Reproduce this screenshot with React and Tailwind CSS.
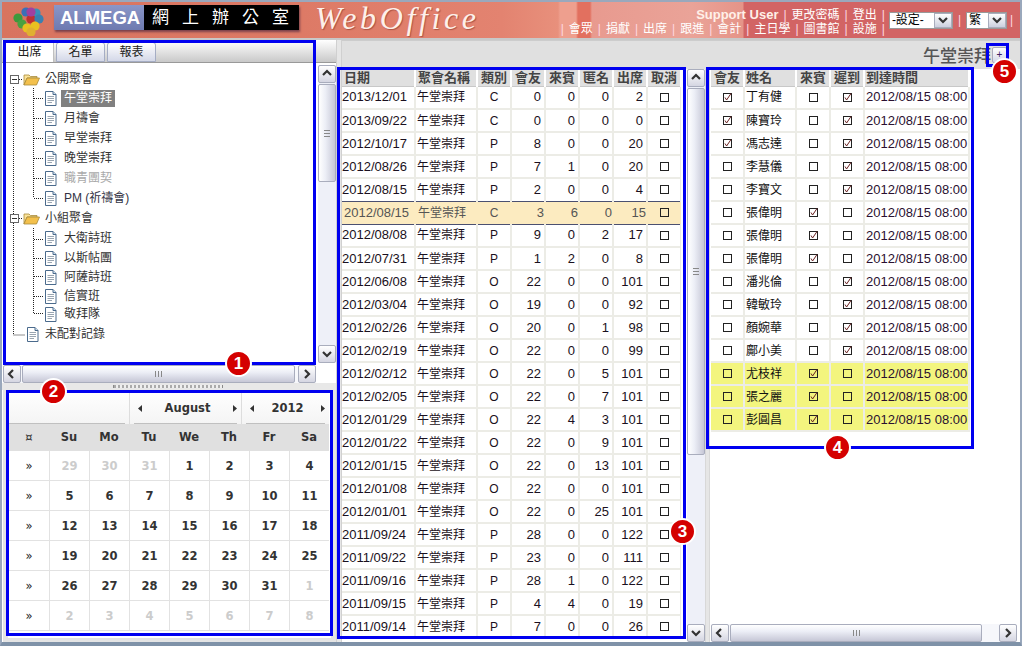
import React from "react";

const F = "[font-family:'Liberation_Sans','Noto_Sans_CJK_TC',sans-serif]";
const rows = [
  ["2013/12/01","C",0,0,0,2],["2013/09/22","C",0,0,0,0],["2012/10/17","P",8,0,0,20],["2012/08/26","P",7,1,0,20],
  ["2012/08/15","P",2,0,0,4],["2012/08/15","C",3,6,0,15],["2012/08/08","P",9,0,2,17],["2012/07/31","P",1,2,0,8],
  ["2012/06/08","O",22,0,0,101],["2012/03/04","O",19,0,0,92],["2012/02/26","O",20,0,1,98],["2012/02/19","O",22,0,0,99],
  ["2012/02/12","O",22,0,5,101],["2012/02/05","O",22,0,7,101],["2012/01/29","O",22,4,3,101],["2012/01/22","O",22,0,9,101],
  ["2012/01/15","O",22,0,13,101],["2012/01/08","O",22,0,0,101],["2012/01/01","O",22,0,25,101],["2011/09/24","P",28,0,0,122],
  ["2011/09/22","P",23,0,0,111],["2011/09/16","P",28,1,0,122],["2011/09/15","P",4,4,0,19],["2011/09/14","P",7,0,0,26],
];
const people = [
  ["丁有健",1,0,1],["陳寶玲",1,0,1],["馮志達",1,0,1],["李慧儀",0,0,1],["李寶文",0,0,1],["張偉明",0,1,0],["張偉明",0,1,0],["張偉明",0,1,0],
  ["潘兆倫",0,0,1],["韓敏玲",0,0,1],["顏婉華",0,0,1],["鄺小美",0,0,1],["尤枝祥",0,1,0],["張之麗",0,1,0],["彭圓昌",0,1,0],
];
const tree = [
  { t: "公開聚會", h: 20, k: "folder" },
  { t: "午堂崇拜", h: 19, k: "doc", sel: true },
  { t: "月禱會", h: 20, k: "doc" },
  { t: "早堂崇拜", h: 20, k: "doc" },
  { t: "晚堂崇拜", h: 20, k: "doc" },
  { t: "職青團契", h: 20, k: "doc", dim: true },
  { t: "PM (祈禱會)", h: 20, k: "doc" },
  { t: "小組聚會", h: 20, k: "folder" },
  { t: "大衛詩班", h: 21, k: "doc" },
  { t: "以斯帖團", h: 19, k: "doc" },
  { t: "阿薩詩班", h: 18, k: "doc" },
  { t: "信實班", h: 20, k: "doc" },
  { t: "敬拜隊", h: 17, k: "doc" },
  { t: "未配對記錄", h: 22, k: "top" },
];

function Chev({ d }) {
  const p = { up: "M2 7 L6 3 L10 7", down: "M2 4 L6 8 L10 4", left: "M7 2 L3 6 L7 10", right: "M4 2 L8 6 L4 10" }[d];
  return (
    <svg width="12" height="12" viewBox="0 0 12 12" fill="none">
      <path d={p} stroke="#333" strokeWidth="2.2" />
    </svg>
  );
}
const btn = "flex items-center justify-center shrink-0 w-[18px] h-[18px] rounded-[2px] border border-[#a9adbd] bg-[linear-gradient(#ffffff,#d5d6e2)]";
function VScroll({ thumb }) {
  return (
    <div className="w-[18px] h-full flex flex-col bg-[#eef0f8]">
      <div className={btn}><Chev d="up" /></div>
      <div className="flex-1 min-h-0">
        <div style={{ height: thumb }} className="mt-px rounded-[2px] border border-[#a9adbd] bg-[linear-gradient(90deg,#ffffff,#eceef6_40%,#c6c7d6)] flex items-center justify-center">
          <div className="w-[6px] h-[7px] border-y border-[#888] relative"><div className="absolute left-0 right-0 top-[2px] h-px bg-[#888]" /></div>
        </div>
      </div>
      <div className={btn}><Chev d="down" /></div>
    </div>
  );
}
function HScroll({ thumb }) {
  return (
    <div className="h-[18px] flex items-stretch bg-[#f6f7fb]">
      <div className={btn}><Chev d="left" /></div>
      <div className="flex-1 min-w-0 px-[1px]">
        <div style={{ width: thumb }} className="h-full rounded-[2px] border border-[#a9adbd] bg-[linear-gradient(#ffffff,#eceef6_40%,#c6c7d6)] flex items-center justify-center">
          <div className="w-[7px] h-[6px] border-x border-[#888] relative"><div className="absolute top-0 bottom-0 left-[2px] w-px bg-[#888]" /></div>
        </div>
      </div>
      <div className={btn}><Chev d="right" /></div>
    </div>
  );
}
function Box({ on }) {
  return (
    <svg width="11" height="11" viewBox="0 0 11 11" className="block mx-auto" fill="none">
      <rect x="1.5" y="1.5" width="8" height="8" stroke="#222" />
      {on ? <path d="M3 5.5 L4.6 8 L9 1.5" stroke="#6a2020" strokeWidth="1" /> : null}
    </svg>
  );
}
function Doc() {
  return (
    <svg width="13" height="15" viewBox="0 0 13 15" fill="none">
      <path d="M1.5 .5 H9 L12 3.5 V14.5 H1.5 Z" fill="#fff" stroke="#4a6a8c" />
      <path d="M9 .5 V3.5 H12" fill="#cfe0ee" stroke="#4a6a8c" />
      <path d="M3.5 5.5 H10 M3.5 7.5 H10 M3.5 9.5 H10 M3.5 11.5 H8" stroke="#9aa6b2" />
    </svg>
  );
}
function Folder() {
  return (
    <svg width="17" height="13" viewBox="0 0 17 13" fill="none">
      <path d="M1 12 V2 H6 L7.5 3.5 H14 V5 H4 Z" fill="#fbe39a" stroke="#a88a3a" strokeWidth=".8" />
      <path d="M1 12 L4 5 H16.5 L13.5 12 Z" fill="#f3c04c" stroke="#a88a3a" strokeWidth=".8" />
    </svg>
  );
}
function Minus() {
  return (
    <span className="w-[9px] h-[9px] border border-[#666] bg-white flex items-center justify-center shrink-0">
      <span className="w-[5px] h-px bg-[#333]" />
    </span>
  );
}
function Arrow({ right }) {
  return (
    <svg width="4" height="7" viewBox="0 0 4 7"><path d={right ? "M0 0 L4 3.5 L0 7 Z" : "M4 0 L0 3.5 L4 7 Z"} fill="#333" /></svg>
  );
}
function Tree() {
  return (
    <div className="relative pt-[6px] pl-[8px]">
      <svg className="absolute left-0 top-0" width="60" height="300" fill="none" stroke="#222" strokeDasharray="1 1">
        <path d="M11.5 24 V272 H23" />
        <path d="M31.5 25 V135" />
        <path d="M31.5 165 V250" />
        <path d="M32 35.5 H41 M32 55.5 H41 M32 75.5 H41 M32 95.5 H41 M32 115.5 H41 M32 135.5 H41" />
        <path d="M32 176.5 H41 M32 195.5 H41 M32 213.5 H41 M32 233.5 H41 M32 250.5 H41" />
        <path d="M17 16.5 H21 M17 155.5 H21" />
      </svg>
      {tree.map((n, i) => (
        <div key={i} style={{ height: n.h }} className={`relative flex items-center ${n.k === "doc" ? "pl-[34px]" : n.k === "top" ? "pl-[16px]" : ""}`}>
          {n.k === "folder" ? <><Minus /><span className="ml-[4px]"><Folder /></span></> : <Doc />}
          <span className={`${n.k === "doc" ? "ml-[4px]" : n.k === "top" ? "ml-[3px]" : "ml-[2px]"} h-[17px] leading-[17px] px-[3px] text-[12px] ${n.sel ? "bg-[#808080] text-white" : n.dim ? "text-[#aaaaaa]" : n.t.startsWith("PM") ? "text-[#334]" : "text-[#333]"}`}>{n.t}</span>
        </div>
      ))}
    </div>
  );
}
const calRows = [
  [[29,1],[30,1],[31,1],[1],[2],[3],[4]],
  [[5],[6],[7],[8],[9],[10],[11]],
  [[12],[13],[14],[15],[16],[17],[18]],
  [[19],[20],[21],[22],[23],[24],[25]],
  [[26],[27],[28],[29],[30],[31],[1,1]],
  [[2,1],[3,1],[4,1],[5,1],[6,1],[7,1],[8,1]],
];
function NavCell({ w, label }) {
  return (
    <div style={{ width: w }} className="border-l border-[#dddddd] flex flex-col">
      <div className="flex-1 flex items-center justify-between pl-[8px] pr-[4px] pt-[3px] text-[11.5px] font-bold">
        <Arrow /><span>{label}</span><Arrow right />
      </div>
      <div className="mx-[4px] h-px bg-[#c0c0c0]" />
    </div>
  );
}
function Calendar() {
  const cal = "[font-family:'DejaVu_Sans',sans-serif]";
  return (
    <div className={`${cal} w-[320px] mx-[4px] text-[#333]`}>
      <div className="h-[33px] flex bg-[linear-gradient(#ffffff,#f4f4f4)]">
        <div className="w-[120px] flex flex-col justify-end"><div className="h-px bg-[#c0c0c0] mr-[4px]" /></div>
        <NavCell w={112} label="August" />
        <NavCell w={88} label="2012" />
      </div>
      <div className="grid grid-cols-[40px_repeat(7,40px)] h-[27px] bg-[#e0e0e0] text-[11.5px] font-bold items-center text-center">
        {["¤","Su","Mo","Tu","We","Th","Fr","Sa"].map((d) => <div key={d} className={d === "¤" ? "font-normal" : ""}>{d}</div>)}
      </div>
      {calRows.map((r, i) => (
        <div key={i} className="grid grid-cols-[40px_repeat(7,40px)] h-[30px] text-[11.5px] font-bold text-center leading-[30px] border-b border-[#e2e2e2]">
          <div className="font-normal text-[#222]">»</div>
          {r.map(([d, off], j) => (
            <div key={j} className={`border-l border-[#e2e2e2] ${off ? "text-[#cccccc]" : ""}`}>{d}</div>
          ))}
        </div>
      ))}
    </div>
  );
}
const th = "h-[17px] bg-[#e0e0e0] border-r-2 border-b border-r-white border-b-[#c8c8c8] text-[13px] font-bold text-[#444] leading-[15px] p-0 overflow-hidden whitespace-nowrap";
const tdBase = "h-[23px] leading-[16px] p-0 overflow-hidden whitespace-nowrap";
const td = `${tdBase} border-r-2 border-b-2 border-[#ecece6]`;
function MeetingTable() {
  const heads = ["日期","聚會名稱","類別","會友","來賓","匿名","出席","取消"];
  return (
    <table className="table-fixed border-collapse w-[339px]">
      <colgroup>
        <col className="w-[73px]" /><col className="w-[62px]" /><col className="w-[34px]" /><col className="w-[34px]" /><col className="w-[34px]" /><col className="w-[34px]" /><col className="w-[34px]" /><col className="w-[34px]" />
      </colgroup>
      <thead><tr>{heads.map((h, i) => <th key={h} className={`${th} ${i < 2 ? "text-left pl-[2px]" : "text-center"}`}>{h}</th>)}</tr></thead>
      <tbody>
        {rows.map((r, i) => {
          const hl = i === 5;
          const above = i === 4;
          const c = hl
            ? `${tdBase} bg-[#fcebc0] text-[#555] border-y border-[#4b5070]`
            : above
              ? `${tdBase} border-r-2 border-[#ecece6] text-[#1a1020]`
              : `${td} text-[#1a1020]`;
          return (
            <tr key={i}>
              <td className={`${c} text-[13px] ${hl ? "pl-[2px]" : "pl-0"}`}>{r[0]}</td>
              <td className={`${c} text-[12px] ${hl ? "pl-[3px]" : "pl-[1px]"}`}>午堂崇拜</td>
              <td className={`${c} text-[12px] text-center`}>{r[1]}</td>
              {r.slice(2).map((n, j) => <td key={j} className={`${c} text-[13px] text-right ${hl ? "pr-[1px]" : "pr-[3px]"}`}>{n}</td>)}
              <td className={c}><Box /></td>
            </tr>
          );
        })}
      </tbody>
    </table>
  );
}
function PeopleTable() {
  const heads = ["會友","姓名","來賓","遲到","到達時間"];
  return (
    <table className="table-fixed border-collapse w-[258px]">
      <colgroup><col className="w-[33px]" /><col className="w-[52px]" /><col className="w-[34px]" /><col className="w-[34px]" /><col className="w-[105px]" /></colgroup>
      <thead><tr>{heads.map((h, i) => <th key={h} className={`${th} ${i === 1 || i === 4 ? "text-left pl-[1px]" : "text-center"}`}>{h}</th>)}</tr></thead>
      <tbody>
        {people.map((p, i) => {
          const c = i >= 12 ? "bg-[#f3f57e]" : "";
          return (
            <tr key={i}>
              <td className={`${td} ${c}`}><Box on={p[1]} /></td>
              <td className={`${td} ${c} text-[12px] pl-[1px] text-[#111]`}>{p[0]}</td>
              <td className={`${td} ${c}`}><Box on={p[2]} /></td>
              <td className={`${td} ${c}`}><Box on={p[3]} /></td>
              <td className={`${td} ${c} text-[13px] text-[#2a1030] pl-[1px]`}>2012/08/15 08:00</td>
            </tr>
          );
        })}
      </tbody>
    </table>
  );
}
function Ring({ cls }) {
  return <div className={`absolute border-[3px] border-[#0000f0] pointer-events-none ${cls}`} />;
}
function Badge({ n, cls }) {
  return (
    <div className={`absolute w-[27px] h-[27px] rounded-full bg-[#d40000] border-[2px] border-white flex items-center justify-center text-white text-[17px] font-bold pointer-events-none ${cls}`}>{n}</div>
  );
}
function Logo() {
  const balls = [[9,14,"#3c9a3c"],[17,8,"#3a70b8"],[27,9,"#3a90b8"],[13,20,"#4aa040"],[22,15,"#c03030"],[30,15,"#3a80b0"],[18,24,"#e8c020"],[26,22,"#e8c020"],[22,8,"#a040a0"],[22,28,"#e0b030"]];
  return (
    <svg width="38" height="32" viewBox="0 0 38 32" className="shrink-0">
      {balls.map(([x, y, c], i) => <circle key={i} cx={x} cy={y} r="4.6" fill={c} />)}
    </svg>
  );
}
const Sep = () => <span className="text-[#ffd8e0] mx-[5px]">|</span>;
function Sel({ label, w }) {
  return (
    <div style={{ width: w }} className="h-[17px] bg-white border border-[#999] flex items-center text-[12px] text-black">
      <span className="flex-1 pl-[2px] whitespace-nowrap overflow-hidden">{label}</span>
      <span className="w-[18px] h-[15px] bg-[linear-gradient(#ffffff,#ccd0de)] border border-[#a9adbd] flex items-center justify-center"><Chev d="down" /></span>
    </div>
  );
}

export default function App() {
  return (
    <div className={`${F} relative w-[1022px] h-[646px] overflow-hidden bg-white flex flex-col border-2 border-[#9aa8bc] border-b-[#7f92a8] border-b-[4px] text-[#111]`}>
      <header className="h-[38px] shrink-0 flex items-center border-b-[2px] border-b-[#c8c8c8] bg-[linear-gradient(90deg,#d8745f_0px,#dd7a66_300px,#e38370_500px,#e8907c_556px,#ee9f8e_558px,#ee9f8e_574px,#e2705f_576px,#e2705f_588px,#e89a8f_590px,#eaa398_690px,#e59488_741px,#d26464_742px,#d26464_100%)]">
        <div className="ml-[7px]"><Logo /></div>
        <div className="ml-[7px] w-[245px] h-[25px] mb-[5px] flex shadow-[1px_2px_2px_rgba(60,30,60,.6)]">
          <div className="w-[90px] bg-[linear-gradient(#8a96c8,#6e7ab0)] text-white font-bold text-[18.5px] leading-[25px] pl-[6px] whitespace-nowrap overflow-hidden">ALMEGA</div>
          <div className="flex-1 bg-black text-white text-[17px] leading-[25px] pl-[8px] whitespace-nowrap overflow-hidden"><span className="tracking-[13px]">網上辦公</span>室</div>
        </div>
        <div className="ml-[16px] mb-[4px] [font-family:'Liberation_Serif',serif] italic text-[32px] leading-[32px] tracking-[3.6px] text-[#fdf0ea] [text-shadow:1px_1px_1px_rgba(120,40,30,.5)]">WebOffice</div>
        <div className="ml-auto flex items-center">
          <div className="text-right text-white text-[12px] leading-[14px] whitespace-nowrap -mr-[1px] mt-[4px]">
            <div><b className="text-[13px] text-[#fff0e8]">Support User</b><Sep />更改密碼<Sep />登出<Sep /></div>
            <div><Sep />會眾<Sep />捐獻<Sep />出席<Sep />跟進<Sep />會計<Sep />主日學<Sep />圖書館<Sep />設施<Sep /></div>
          </div>
          <Sel label="-設定-" w={64} />
          <span className="text-[#ffd8e0] text-[12px] mx-[5px]">|</span>
          <Sel label="繁" w={41} />
          <span className="text-[#ffd8e0] text-[12px] ml-[3px] w-[10px]">|</span>
        </div>
      </header>
      <div className="flex-1 min-h-0 flex">
        <aside className="w-[334px] shrink-0 flex flex-col">
          <div className="h-[23px] flex items-end pl-[3px] gap-[2px] border-b border-[#999] bg-[linear-gradient(#ffffff,#c9c9c9)]">
            <div className="w-[49px] h-[21px] bg-white border-t-2 border-t-[#f0a020] border-x border-x-[#c0c0c0] text-center text-[12px] leading-[19px] text-[#222]">出席</div>
            <div className="w-[49px] h-[20px] rounded-t-[3px] border border-[#a5adc4] bg-[linear-gradient(#ffffff,#d4d8e8)] text-center text-[12px] leading-[18px] text-[#222]">名單</div>
            <div className="w-[49px] h-[20px] rounded-t-[3px] border border-[#a5adc4] bg-[linear-gradient(#ffffff,#d4d8e8)] text-center text-[12px] leading-[18px] text-[#222]">報表</div>
          </div>
          <div className="h-[302px] flex">
            <div className="flex-1 min-w-0"><Tree /></div>
            <div className="py-[2px] h-full"><VScroll thumb={98} /></div>
          </div>
          <div className="pl-[1px] pr-[20px]"><HScroll thumb={273} /></div>
          <div className="h-[7px] bg-[#e8e8e8] flex items-center justify-center">
            <div className="w-[110px] h-[3px] ml-[-2px] border-x border-[#888] bg-[repeating-linear-gradient(90deg,#aaa_0_2px,#eee_2px_4px)]" />
          </div>
          <div className="flex-1 min-h-0 border-x-[5px] border-x-[#e4e4e4] border-b-[4px] border-b-[#e4e4e4] ml-[1px] overflow-hidden pt-[1px]">
            <div className="-ml-[3px]"><Calendar /></div>
          </div>
        </aside>
        <div className="w-[6px] shrink-0 bg-[#e6e6e6] border-x border-[#d0d0d0]" />
        <main className="flex-1 min-w-0 flex flex-col">
          <div className="h-[29px] shrink-0 bg-[#e0e0e0] flex items-center justify-end pr-[13px] border-t border-[#ccc]">
            <span className="text-[17px] text-[#555] font-medium mt-[3px]">午堂崇拜</span>
            <span className="ml-[1px] w-[15px] h-[16px] rounded-[2px] border border-[#aab] bg-[linear-gradient(#ffffff,#d4d8e8)] text-[10px] leading-[14px] text-center text-[#402060]">+</span>
          </div>
          <div className="flex-1 min-h-0 flex">
            <div className="w-[339px] shrink-0 overflow-hidden"><MeetingTable /></div>
            <div className="w-[6px] shrink-0" />
            <VScroll thumb={367} />
            <div className="w-[5px] shrink-0 bg-[#e6e6e6] border-x border-[#d8d8d8]" />
            <div className="flex-1 min-w-0 flex flex-col pl-[1px]">
              <div className="flex-1 min-h-0"><PeopleTable /></div>
              <div className="pr-[3px]"><HScroll thumb={252} /></div>
            </div>
          </div>
        </main>
      </div>
      <Ring cls="left-[1px] top-[38px] w-[313px] h-[325px]" />
      <Ring cls="left-[4px] top-[388px] w-[327px] h-[246px]" />
      <Ring cls="left-[335px] top-[65px] w-[349px] h-[572px]" />
      <Ring cls="left-[704px] top-[65px] w-[268px] h-[382px]" />
      <Ring cls="left-[984px] top-[41px] w-[23px] h-[24px]" />
      <Badge n="1" cls="left-[223px] top-[348px]" />
      <Badge n="2" cls="left-[38px] top-[376px]" />
      <Badge n="3" cls="left-[667px] top-[516px]" />
      <Badge n="4" cls="left-[822px] top-[432px]" />
      <Badge n="5" cls="left-[989px] top-[56px]" />
    </div>
  );
}
